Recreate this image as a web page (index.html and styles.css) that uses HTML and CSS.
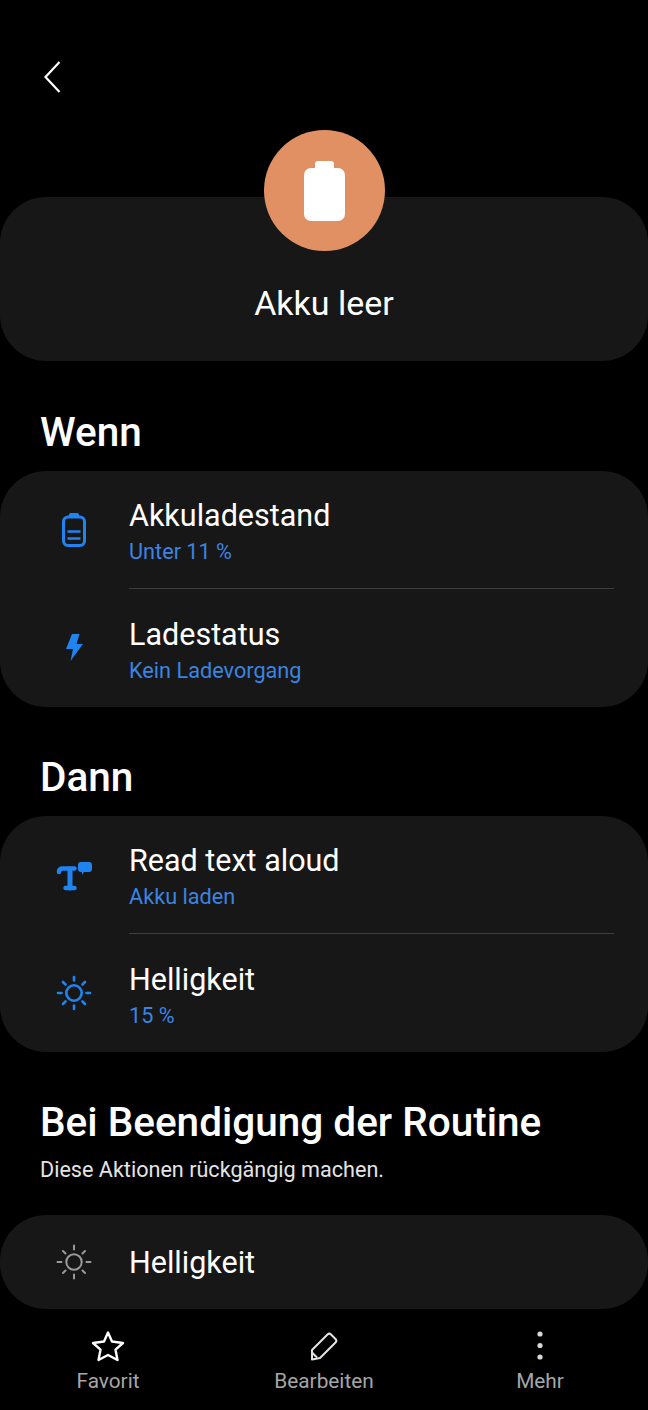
FILE: index.html
```html
<!DOCTYPE html>
<html lang="de">
<head>
    <meta charset="UTF-8">
    <meta name="viewport" content="width=device-width, initial-scale=1.0">
    <title>Akku leer</title>
    <link rel="stylesheet" href="styles.css">
</head>
<body>
    <div class="topbar">
        <svg class="back" width="20" height="34" viewBox="0 0 20 34"><path d="M17.500 2 3.500 17l14 15" fill="none" stroke="#fff" stroke-width="2.200"/></svg>
    </div>

    <div class="hero">
        <div class="avatar">
            <svg width="41" height="60" viewBox="0 0 41 60"><path d="M14 0h13a3 3 0 0 1 3 3v4h4a7 7 0 0 1 7 7v39a7 7 0 0 1-7 7H7a7 7 0 0 1-7-7V14a7 7 0 0 1 7-7h4V3a3 3 0 0 1 3-3z" fill="#fff"/></svg>
        </div>
        <div class="card hero-card">Akku leer</div>
    </div>

    <h2 class="section-title">Wenn</h2>
    <div class="card">
        <div class="row">
            <div class="row-icon">
                <svg width="24" height="35" viewBox="0 0 24 35" fill="none" stroke="#1f84f0" stroke-width="3"><path d="M7 5V2.500A1.500 1.500 0 0 1 8.500 1h7A1.500 1.500 0 0 1 17 2.500V5z" fill="#1f84f0" stroke="none"/><rect x="1.500" y="5" width="21" height="28.500" rx="4.500"/><path d="M5.500 19.500h13M5.500 26.500h13" stroke-width="2.600"/></svg>
            </div>
            <div class="row-text">
                <div class="row-title">Akkuladestand</div>
                <div class="row-sub">Unter 11 %</div>
            </div>
        </div>
        <div class="row row-line">
            <div class="row-icon">
                <svg width="17" height="27" viewBox="0 0 17 27"><path d="M6 0h7.500L10.500 10H17L4.500 27 7 15H0z" fill="#1f84f0"/></svg>
            </div>
            <div class="row-text">
                <div class="row-title">Ladestatus</div>
                <div class="row-sub">Kein Ladevorgang</div>
            </div>
        </div>
    </div>

    <h2 class="section-title">Dann</h2>
    <div class="card">
        <div class="row">
            <div class="row-icon">
                <svg width="36" height="33" viewBox="0 -3 36 33" fill="none" stroke="#1f84f0" stroke-linecap="round"><path d="M3 11Q3 7.500 7 7.500H18.500" stroke-width="4.500"/><path d="M14 8v19" stroke-width="5"/><path d="M9.500 27h9" stroke-width="4.500"/><path d="M25 1h8a3 3 0 0 1 3 3v4a3 3 0 0 1-3 3h-5l-2 3v-3h-1a3 3 0 0 1-3-3V4a3 3 0 0 1 3-3z" fill="#1f84f0" stroke="none"/></svg>
            </div>
            <div class="row-text">
                <div class="row-title">Read text aloud</div>
                <div class="row-sub">Akku laden</div>
            </div>
        </div>
        <div class="row row-line">
            <div class="row-icon">
                <svg width="36" height="36" viewBox="0 0 36 36" fill="none" stroke="#1f84f0" stroke-width="2.600" stroke-linecap="round"><circle cx="18" cy="18" r="7.700"/><path d="M18 2v3.500M18 30.500V34M2 18h3.500M30.500 18H34M7 7l2.500 2.500M26.500 26.500 29 29M7 29l2.500-2.500M26.500 9.500 29 7"/></svg>
            </div>
            <div class="row-text">
                <div class="row-title">Helligkeit</div>
                <div class="row-sub">15 %</div>
            </div>
        </div>
    </div>

    <h2 class="section-title">Bei Beendigung der Routine</h2>
    <p class="section-note">Diese Aktionen rückgängig machen.</p>
    <div class="card">
        <div class="row row-single">
            <div class="row-icon">
                <svg width="36" height="36" viewBox="0 0 36 36" fill="none" stroke="#9a9a9a" stroke-width="2" stroke-linecap="round"><circle cx="18" cy="18" r="7.700"/><path d="M18 1.500v4M18 30.500v4M1.500 18h4M30.500 18h4M7 7l2.500 2.500M26.500 26.500 29 29M7 29l2.500-2.500M26.500 9.500 29 7"/></svg>
            </div>
            <div class="row-text">
                <div class="row-title">Helligkeit</div>
            </div>
        </div>
    </div>

    <div class="bottombar">
        <div class="action">
            <svg width="34" height="32" viewBox="0 0 34 32"><path d="M17 2.500 21 11.500 32 13 24.500 19.700 26.500 30 17 25 7.500 30 9.500 19.700 2 13 13 11.500z" fill="none" stroke="#fff" stroke-width="2.400" stroke-linejoin="round"/></svg>
            <span>Favorit</span>
        </div>
        <div class="action">
            <svg width="28" height="32" viewBox="0 -2 28 32" fill="none" stroke="#e4e4e4" stroke-width="2" stroke-linejoin="round"><path d="M2 18 17.500 2.500a2.500 2.500 0 0 1 3.500 0l4.500 4.500a2.500 2.500 0 0 1 0 3.500L10 26l-8 1.500z"/><path d="M2.500 21l4.500 4.500"/></svg>
            <span>Bearbeiten</span>
        </div>
        <div class="action">
            <svg width="8" height="32" viewBox="0 0 8 32" fill="#d8d8d8"><circle cx="4" cy="4" r="2.600"/><circle cx="4" cy="15.500" r="2.600"/><circle cx="4" cy="27" r="2.600"/></svg>
            <span>Mehr</span>
        </div>
    </div>
</body>
</html>
```

FILE: styles.css
```css
body {
    font-family: Roboto, sans-serif;
    background-color: #000;
    color: #fff;
    margin: 0;
    padding: 0;
    height: 1410px;
    overflow: hidden;
}

.topbar {
    height: 130px;
    box-sizing: border-box;
    padding: 60px 0 0 42px;
}

.back {
    display: block;
}

.hero {
    display: flex;
    flex-direction: column;
    align-items: center;
    margin-bottom: 1px;
}

.avatar {
    width: 121px;
    height: 121px;
    border-radius: 50%;
    background-color: #e09063;
    display: flex;
    align-items: center;
    justify-content: center;
    margin-bottom: -54px;
    z-index: 1;
}

.card {
    background-color: #171717;
    border-radius: 46px;
    width: 100%;
}

.hero-card {
    height: 164px;
    box-sizing: border-box;
    padding-top: 85px;
    text-align: center;
    font-size: 34px;
    line-height: 42px;
}

.section-title {
    font-size: 40.5px;
    font-weight: 500;
    line-height: 44px;
    margin: 0;
    padding: 48px 40px 17px;
}

.section-note {
    font-size: 21.6px;
    line-height: 28px;
    color: #e4e4e4;
    margin: -5px 40px 31px;
}

.row {
    display: flex;
    align-items: center;
    height: 117px;
    padding-left: 44px;
}

.row-line {
    height: 119px;
}

.row-single {
    height: 94px;
}

.row-line .row-text {
    border-top: 1px solid #3d3d3d;
}

.row-icon {
    width: 60px;
    margin-right: 25px;
    flex-shrink: 0;
    display: flex;
    justify-content: center;
}

.row-text {
    flex: 1;
    margin-right: 34px;
    height: 100%;
    box-sizing: border-box;
    padding-top: 4px;
    display: flex;
    flex-direction: column;
    justify-content: center;
}

.row-single .row-text {
    padding-top: 1px;
}

.row-title {
    font-size: 30.5px;
    line-height: 38px;
}

.row-sub {
    font-size: 21.7px;
    line-height: 28px;
    color: #3b84e2;
    margin-top: 3px;
}

.bottombar {
    display: grid;
    grid-template-columns: repeat(3, 216px);
    padding-top: 21px;
}

.action {
    display: flex;
    flex-direction: column;
    align-items: center;
    gap: 7px;
    color: #a6a6a6;
    font-size: 20.8px;
    line-height: 24px;
}
```
